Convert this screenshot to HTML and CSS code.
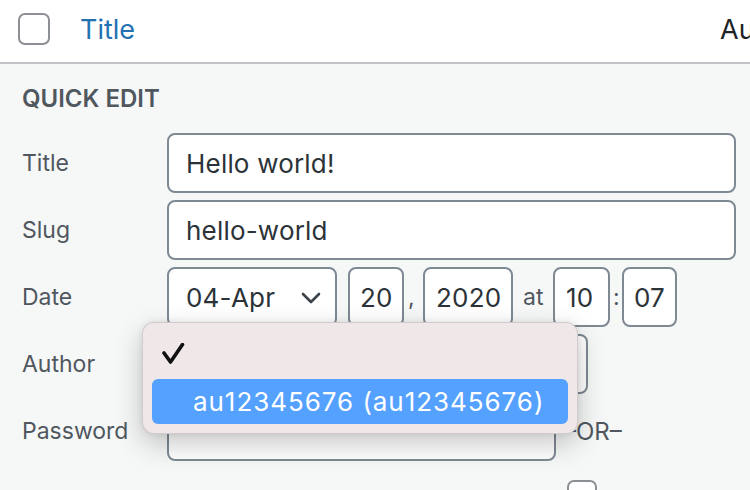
FILE: index.html
```html
<!DOCTYPE html>
<html>
<head>
<meta charset="utf-8">
<link rel="stylesheet" href="styles.css">
</head>
<body>
<div class="header">
  <span class="cb"></span>
  <a class="col-title">Title</a>
  <span class="col-author">Author</span>
</div>
<div class="quick">
  <div class="legend">QUICK EDIT</div>
  <div class="row">
    <span class="label">Title</span>
    <div class="input wide">Hello world!</div>
  </div>
  <div class="row">
    <span class="label">Slug</span>
    <div class="input wide">hello-world</div>
  </div>
  <div class="row">
    <span class="label">Date</span>
    <div class="input month">04-Apr
      <svg class="chev" width="20" height="12" viewBox="0 0 20 12"><path d="M2 2 L10 10 L18 2" fill="none" stroke="#3c434a" stroke-width="2.6" stroke-linecap="round" stroke-linejoin="round"/></svg>
    </div>
    <div class="input day">20</div>
    <span class="sep comma">,</span>
    <div class="input year">2020</div>
    <span class="sep at">at</span>
    <div class="input hour">10</div>
    <span class="sep colon">:</span>
    <div class="input minute">07</div>
  </div>
  <div class="row">
    <span class="label">Author</span>
    <div class="input author"></div>
  </div>
  <div class="row">
    <span class="label">Password</span>
    <div class="input password"></div>
    <span class="or">–OR–</span>
  </div>
  <div class="row next">
    <span class="cb small"></span>
  </div>
</div>
<div class="popup">
  <div class="opt checked">
    <svg width="24" height="24" viewBox="0 0 24 24" class="check"><path d="M2 10 L8.5 19 L20.5 1.5" fill="none" stroke="#111" stroke-width="3.6" stroke-linecap="round" stroke-linejoin="round"/></svg>
  </div>
  <div class="opt hl">au12345676 (au12345676)</div>
</div>
</body>
</html>
```
FILE: styles.css
```css
* { box-sizing: border-box; }
html, body { margin: 0; padding: 0; }
body {
  background: #f6f7f7;
  font-family: Inter, "Liberation Sans", sans-serif;
  width: 750px;
  height: 490px;
  overflow: hidden;
  position: relative;
}
.header {
  height: 64px;
  background: #fff;
  border-bottom: 2px solid #c3c4c7;
  display: flex;
  align-items: center;
  padding-left: 18px;
  padding-bottom: 4px;
  white-space: nowrap;
  overflow: hidden;
}
.cb {
  width: 32px;
  height: 32px;
  border: 2px solid #8c8f94;
  border-radius: 7px;
  background: #fff;
  flex: none;
}
.col-title {
  color: #2271b1;
  font-size: 27px;
  margin-left: 30px;
}
.col-author {
  color: #1d2327;
  font-size: 27px;
  margin-left: 585px;
}
.quick {
  padding: 21px 0 0 22px;
  display: flex;
  flex-direction: column;
  gap: 7px;
}
.legend {
  font-size: 24px;
  font-weight: 600;
  color: #50575e;
  line-height: 28px;
  margin-bottom: 13px;
}
.row {
  display: flex;
  align-items: center;
  height: 60px;
}
.label {
  width: 145px;
  flex: none;
  font-size: 23px;
  color: #50575e;
}
.input {
  height: 60px;
  border: 2px solid #7e8993;
  border-radius: 8px;
  background: #fff;
  display: flex;
  align-items: center;
  font-size: 26px;
  letter-spacing: 0.2px;
  color: #2c3338;
  padding-left: 17px;
  flex: none;
}
.wide { width: 569px; }
.month { width: 170px; position: relative; }
.chev { position: absolute; left: 132px; top: 23px; }
.day { width: 56px; margin-left: 11px; padding-left: 10px; }
.year { width: 90px; padding-left: 11px; }
.hour { width: 57px; padding-left: 11px; }
.minute { width: 55px; padding-left: 10px; }
.sep { color: #50575e; font-size: 23px; }
.comma { width: 19px; padding-left: 4px; }
.at { width: 40px; padding-left: 10px; }
.colon { width: 12px; padding-left: 3px; }
.author { width: 421px; }
.password { width: 389px; }
.or { color: #50575e; font-size: 24px; margin-left: 8px; }
.next { padding-left: 545px; align-items: flex-start; padding-top: 12px; }
.cb.small { width: 30px; height: 30px; }
.popup {
  position: absolute;
  left: 142px;
  top: 322px;
  width: 436px;
  height: 112px;
  background: #f0e8e8;
  border: 1px solid rgba(0,0,0,0.12);
  border-radius: 12px;
  box-shadow: 0 10px 28px rgba(0,0,0,0.22), 0 0 6px rgba(0,0,0,0.08);
  padding: 9px;
}
.opt {
  height: 45px;
  border-radius: 6px;
  display: flex;
  align-items: center;
  font-size: 26px;
}
.checked { padding-left: 10px; height: 46px; }
.hl {
  background: #55a1ff;
  color: #fff;
  padding-left: 41px;
  margin-top: 1px;
  letter-spacing: 0.95px;
}
```
